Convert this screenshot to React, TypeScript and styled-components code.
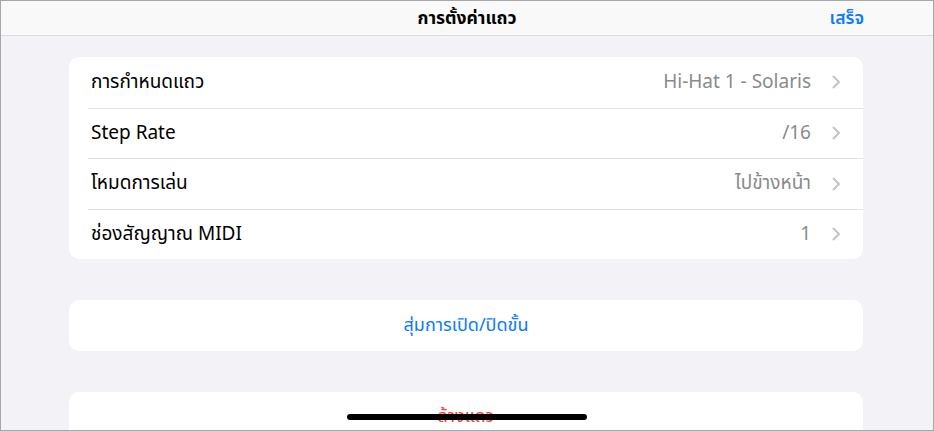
import React from 'react'
import styled, { createGlobalStyle } from 'styled-components'

const GlobalStyle = createGlobalStyle`
  html, body {
    margin: 0;
    padding: 0;
    background: #ffffff;
  }
  body {
    font-family: "Noto Sans Thai", "Noto Sans", "Liberation Sans", sans-serif;
    -webkit-font-smoothing: antialiased;
  }
`

const Frame = styled.div`
  position: relative;
  width: 934px;
  height: 431px;
  box-sizing: border-box;
  border: 1px solid #a7a7a9;
  background: #f2f2f7;
  overflow: hidden;
  display: flex;
  flex-direction: column;
`

const NavBar = styled.header`
  position: relative;
  height: 35px;
  box-sizing: border-box;
  flex-shrink: 0;
  background: #f9f9f9;
  border-bottom: 1px solid #dcdce0;
  display: flex;
  align-items: center;
  justify-content: center;
`

const Title = styled.h1`
  margin: 0;
  font-size: 17.5px;
  font-weight: 700;
  color: #000;
`

const DoneButton = styled.button`
  position: absolute;
  right: 69px;
  top: 0;
  height: 34px;
  border: 0;
  background: none;
  padding: 0;
  font-family: inherit;
  font-size: 17.5px;
  font-weight: 600;
  color: #0a7aff;
`

const Content = styled.main`
  display: flex;
  flex-direction: column;
  gap: 41px;
  padding: 21px 70px 0 68px;
`

const Card = styled.section`
  background: #ffffff;
  border-radius: 10px;
  overflow: hidden;
`

const Row = styled.div`
  height: 50.5px;
  box-sizing: border-box;
  display: flex;
  align-items: center;
  margin-left: 19px;
  padding-right: 22px;
  & + & {
    border-top: 1px solid #e3e3e6;
  }
`

const Label = styled.span`
  flex: 1;
  padding-left: 3px;
  font-size: 19px;
  color: #000;
`

const Value = styled.span`
  font-size: 19px;
  color: #8a8a8e;
  margin-right: 21px;
`

const Action = styled.button<{ $tone: 'blue' | 'red' }>`
  width: 100%;
  height: 50.5px;
  border: 0;
  background: none;
  font-family: inherit;
  font-size: 18px;
  color: ${p => (p.$tone === 'red' ? '#ff3b30' : '#0a7aff')};
`

const HomeIndicator = styled.div`
  position: absolute;
  left: 346px;
  bottom: 10px;
  width: 240px;
  height: 6px;
  border-radius: 3px;
  background: #000;
`

const Chevron = () => (
  <svg width="9" height="14" viewBox="0 0 9 14" fill="none">
    <path d="M1.5 1.5 L7 7 L1.5 12.5" stroke="#c4c4c7" strokeWidth="2" strokeLinecap="round" strokeLinejoin="round" />
  </svg>
)

const rows = [
  { label: 'การกำหนดแถว', value: 'Hi-Hat 1 - Solaris' },
  { label: 'Step Rate', value: '/16' },
  { label: 'โหมดการเล่น', value: 'ไปข้างหน้า' },
  { label: 'ช่องสัญญาณ MIDI', value: '1' },
]

const App = () => {
  return (
    <>
      <GlobalStyle />
      <Frame>
        <NavBar>
          <Title>การตั้งค่าแถว</Title>
          <DoneButton>เสร็จ</DoneButton>
        </NavBar>
        <Content>
          <Card>
            {rows.map(r => (
              <Row key={r.label}>
                <Label>{r.label}</Label>
                <Value>{r.value}</Value>
                <Chevron />
              </Row>
            ))}
          </Card>
          <Card>
            <Action $tone="blue">สุ่มการเปิด/ปิดขั้น</Action>
          </Card>
          <Card>
            <Action $tone="red">ล้างแถว</Action>
          </Card>
        </Content>
        <HomeIndicator />
      </Frame>
    </>
  )
}

export default App
